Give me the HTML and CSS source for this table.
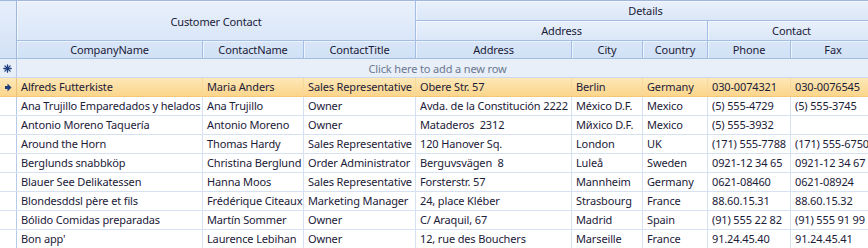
FILE: index.html
```html
<!DOCTYPE html>
<html>
<head>
<meta charset="utf-8">
<link rel="stylesheet" href="styles.css">
</head>
<body>
<div class="grid">
  <div class="head">
    <div class="hc ind-h"></div>
    <div class="hc band cc">Customer Contact</div>
    <div class="hc band details">Details</div>
    <div class="hc band addr">Address</div>
    <div class="hc band contact">Contact</div>
    <div class="hc col c2">CompanyName</div>
    <div class="hc col c3">ContactName</div>
    <div class="hc col c4">ContactTitle</div>
    <div class="hc col c5">Address</div>
    <div class="hc col c6">City</div>
    <div class="hc col c7">Country</div>
    <div class="hc col c8">Phone</div>
    <div class="hc col c9">Fax</div>
  </div>
  <div class="newrow">
    <div class="ind ind-new"><svg width="9" height="9" viewBox="0 0 9 9"><g stroke="#1f3f7e" stroke-width="1.3" stroke-linecap="round"><line x1="4.5" y1="0.8" x2="4.5" y2="8.2"/><line x1="0.8" y1="4.5" x2="8.2" y2="4.5"/><line x1="1.9" y1="1.9" x2="7.1" y2="7.1"/><line x1="7.1" y1="1.9" x2="1.9" y2="7.1"/></g><circle cx="4.5" cy="4.5" r="1.6" fill="#1f3f7e"/></svg></div>
    <div class="newtext">Click here to add a new row</div>
  </div>
  <div class="row sel">
    <div class="ind"><svg width="8" height="9" viewBox="0 0 8 9"><path d="M1 3 H3.5 V0.5 L7.5 4.5 L3.5 8.5 V6 H1 Z" fill="#1f3f7e"/></svg></div>
    <div class="c">Alfreds Futterkiste</div><div class="c">Maria Anders</div><div class="c">Sales Representative</div><div class="c">Obere Str. 57</div><div class="c">Berlin</div><div class="c">Germany</div><div class="c">030-0074321</div><div class="c">030-0076545</div>
  </div>
  <div class="row">
    <div class="ind"></div>
    <div class="c">Ana Trujillo Emparedados y helados</div><div class="c">Ana Trujillo</div><div class="c">Owner</div><div class="c">Avda. de la Constitución 2222</div><div class="c">México D.F.</div><div class="c">Mexico</div><div class="c">(5) 555-4729</div><div class="c">(5) 555-3745</div>
  </div>
  <div class="row">
    <div class="ind"></div>
    <div class="c">Antonio Moreno Taquería</div><div class="c">Antonio Moreno</div><div class="c">Owner</div><div class="c">Mataderos  2312</div><div class="c">Mйxico D.F.</div><div class="c">Mexico</div><div class="c">(5) 555-3932</div><div class="c"></div>
  </div>
  <div class="row">
    <div class="ind"></div>
    <div class="c">Around the Horn</div><div class="c">Thomas Hardy</div><div class="c">Sales Representative</div><div class="c">120 Hanover Sq.</div><div class="c">London</div><div class="c">UK</div><div class="c">(171) 555-7788</div><div class="c">(171) 555-6750</div>
  </div>
  <div class="row">
    <div class="ind"></div>
    <div class="c">Berglunds snabbköp</div><div class="c">Christina Berglund</div><div class="c">Order Administrator</div><div class="c">Berguvsvägen  8</div><div class="c">Luleå</div><div class="c">Sweden</div><div class="c">0921-12 34 65</div><div class="c">0921-12 34 67</div>
  </div>
  <div class="row">
    <div class="ind"></div>
    <div class="c">Blauer See Delikatessen</div><div class="c">Hanna Moos</div><div class="c">Sales Representative</div><div class="c">Forsterstr. 57</div><div class="c">Mannheim</div><div class="c">Germany</div><div class="c">0621-08460</div><div class="c">0621-08924</div>
  </div>
  <div class="row">
    <div class="ind"></div>
    <div class="c">Blondesddsl père et fils</div><div class="c">Frédérique Citeaux</div><div class="c">Marketing Manager</div><div class="c">24, place Kléber</div><div class="c">Strasbourg</div><div class="c">France</div><div class="c">88.60.15.31</div><div class="c">88.60.15.32</div>
  </div>
  <div class="row">
    <div class="ind"></div>
    <div class="c">Bólido Comidas preparadas</div><div class="c">Martín Sommer</div><div class="c">Owner</div><div class="c">C/ Araquil, 67</div><div class="c">Madrid</div><div class="c">Spain</div><div class="c">(91) 555 22 82</div><div class="c">(91) 555 91 99</div>
  </div>
  <div class="row">
    <div class="ind"></div>
    <div class="c">Bon app'</div><div class="c">Laurence Lebihan</div><div class="c">Owner</div><div class="c">12, rue des Bouchers</div><div class="c">Marseille</div><div class="c">France</div><div class="c">91.24.45.40</div><div class="c">91.24.45.41</div>
  </div>
</div>
</body>
</html>
```
FILE: styles.css
```css
* { box-sizing: border-box; }
html, body { margin: 0; padding: 0; background: #ffffff; overflow: hidden; }
body { width: 868px; height: 248px; }
.grid {
  width: 876px;
  font-family: "Noto Sans", "Open Sans", sans-serif;
  font-size: 11px;
  letter-spacing: -0.14px;
  color: #1b2038;
}
.head {
  display: grid;
  grid-template-columns: 17px 186px 101px 112px 156px 71px 65px 83px 85px;
  grid-template-rows: 20px 20px 18px;
  border-top: 1px solid #9fb8dc;
}
.hc {
  display: flex;
  align-items: center;
  justify-content: center;
  white-space: nowrap;
  overflow: hidden;
  border-right: 1px solid #a4bde2;
  border-bottom: 1px solid #a4bde2;
  color: #1b2038;
}
.ind-h {
  grid-column: 1;
  grid-row: 1 / 4;
  background: linear-gradient(#e6eefb, #d3e2f6);
  border-right: 1px solid #9fb8dc;
}
.band {
  background: linear-gradient(#e9f0fb, #dae7f8);
  box-shadow: inset 1px 1px 0 #f4f8fe;
}
.cc { grid-column: 2 / 5; grid-row: 1 / 3; padding-top: 1px; }
.details { grid-column: 5 / 10; grid-row: 1; }
.addr { grid-column: 5 / 8; grid-row: 2; }
.contact { grid-column: 8 / 10; grid-row: 2; }
.col {
  grid-row: 3;
  background: linear-gradient(#d9e6f8, #d1e1f5);
  box-shadow: inset 1px 1px 0 #eef4fd;
}
.c2 { grid-column: 2; }
.c3 { grid-column: 3; }
.c4 { grid-column: 4; }
.c5 { grid-column: 5; }
.c6 { grid-column: 6; }
.c7 { grid-column: 7; }
.c8 { grid-column: 8; }
.c9 { grid-column: 9; }
.newrow {
  display: grid;
  grid-template-columns: 17px 1fr;
  height: 19px;
  background: #e8eff9;
  border-bottom: 1px solid #cbd9ee;
}
.ind {
  display: flex;
  align-items: center;
  justify-content: center;
  border-right: 1px solid #b6cae8;
  padding-right: 1px;
}
.ind-new { background: #e8eff9; }
.newtext {
  display: flex;
  align-items: center;
  justify-content: center;
  color: #6b7890;
  padding-right: 18px;
}
.row {
  display: grid;
  grid-template-columns: 17px 186px 101px 112px 156px 71px 65px 83px 85px;
  height: 19px;
  border-bottom: 1px solid #d6e1f1;
}
.c {
  white-space: pre;
  overflow: hidden;
  border-right: 1px solid #d6e1f1;
  padding-left: 4px;
  line-height: 18px;
}
.sel {
  background: linear-gradient(#fde8b8, #fbd58b);
  border-bottom: 1px solid #f2c877;
}
.sel .c { border-right-color: #f6d89a; }
.sel .ind { border-right-color: #e8c27a; }
```
